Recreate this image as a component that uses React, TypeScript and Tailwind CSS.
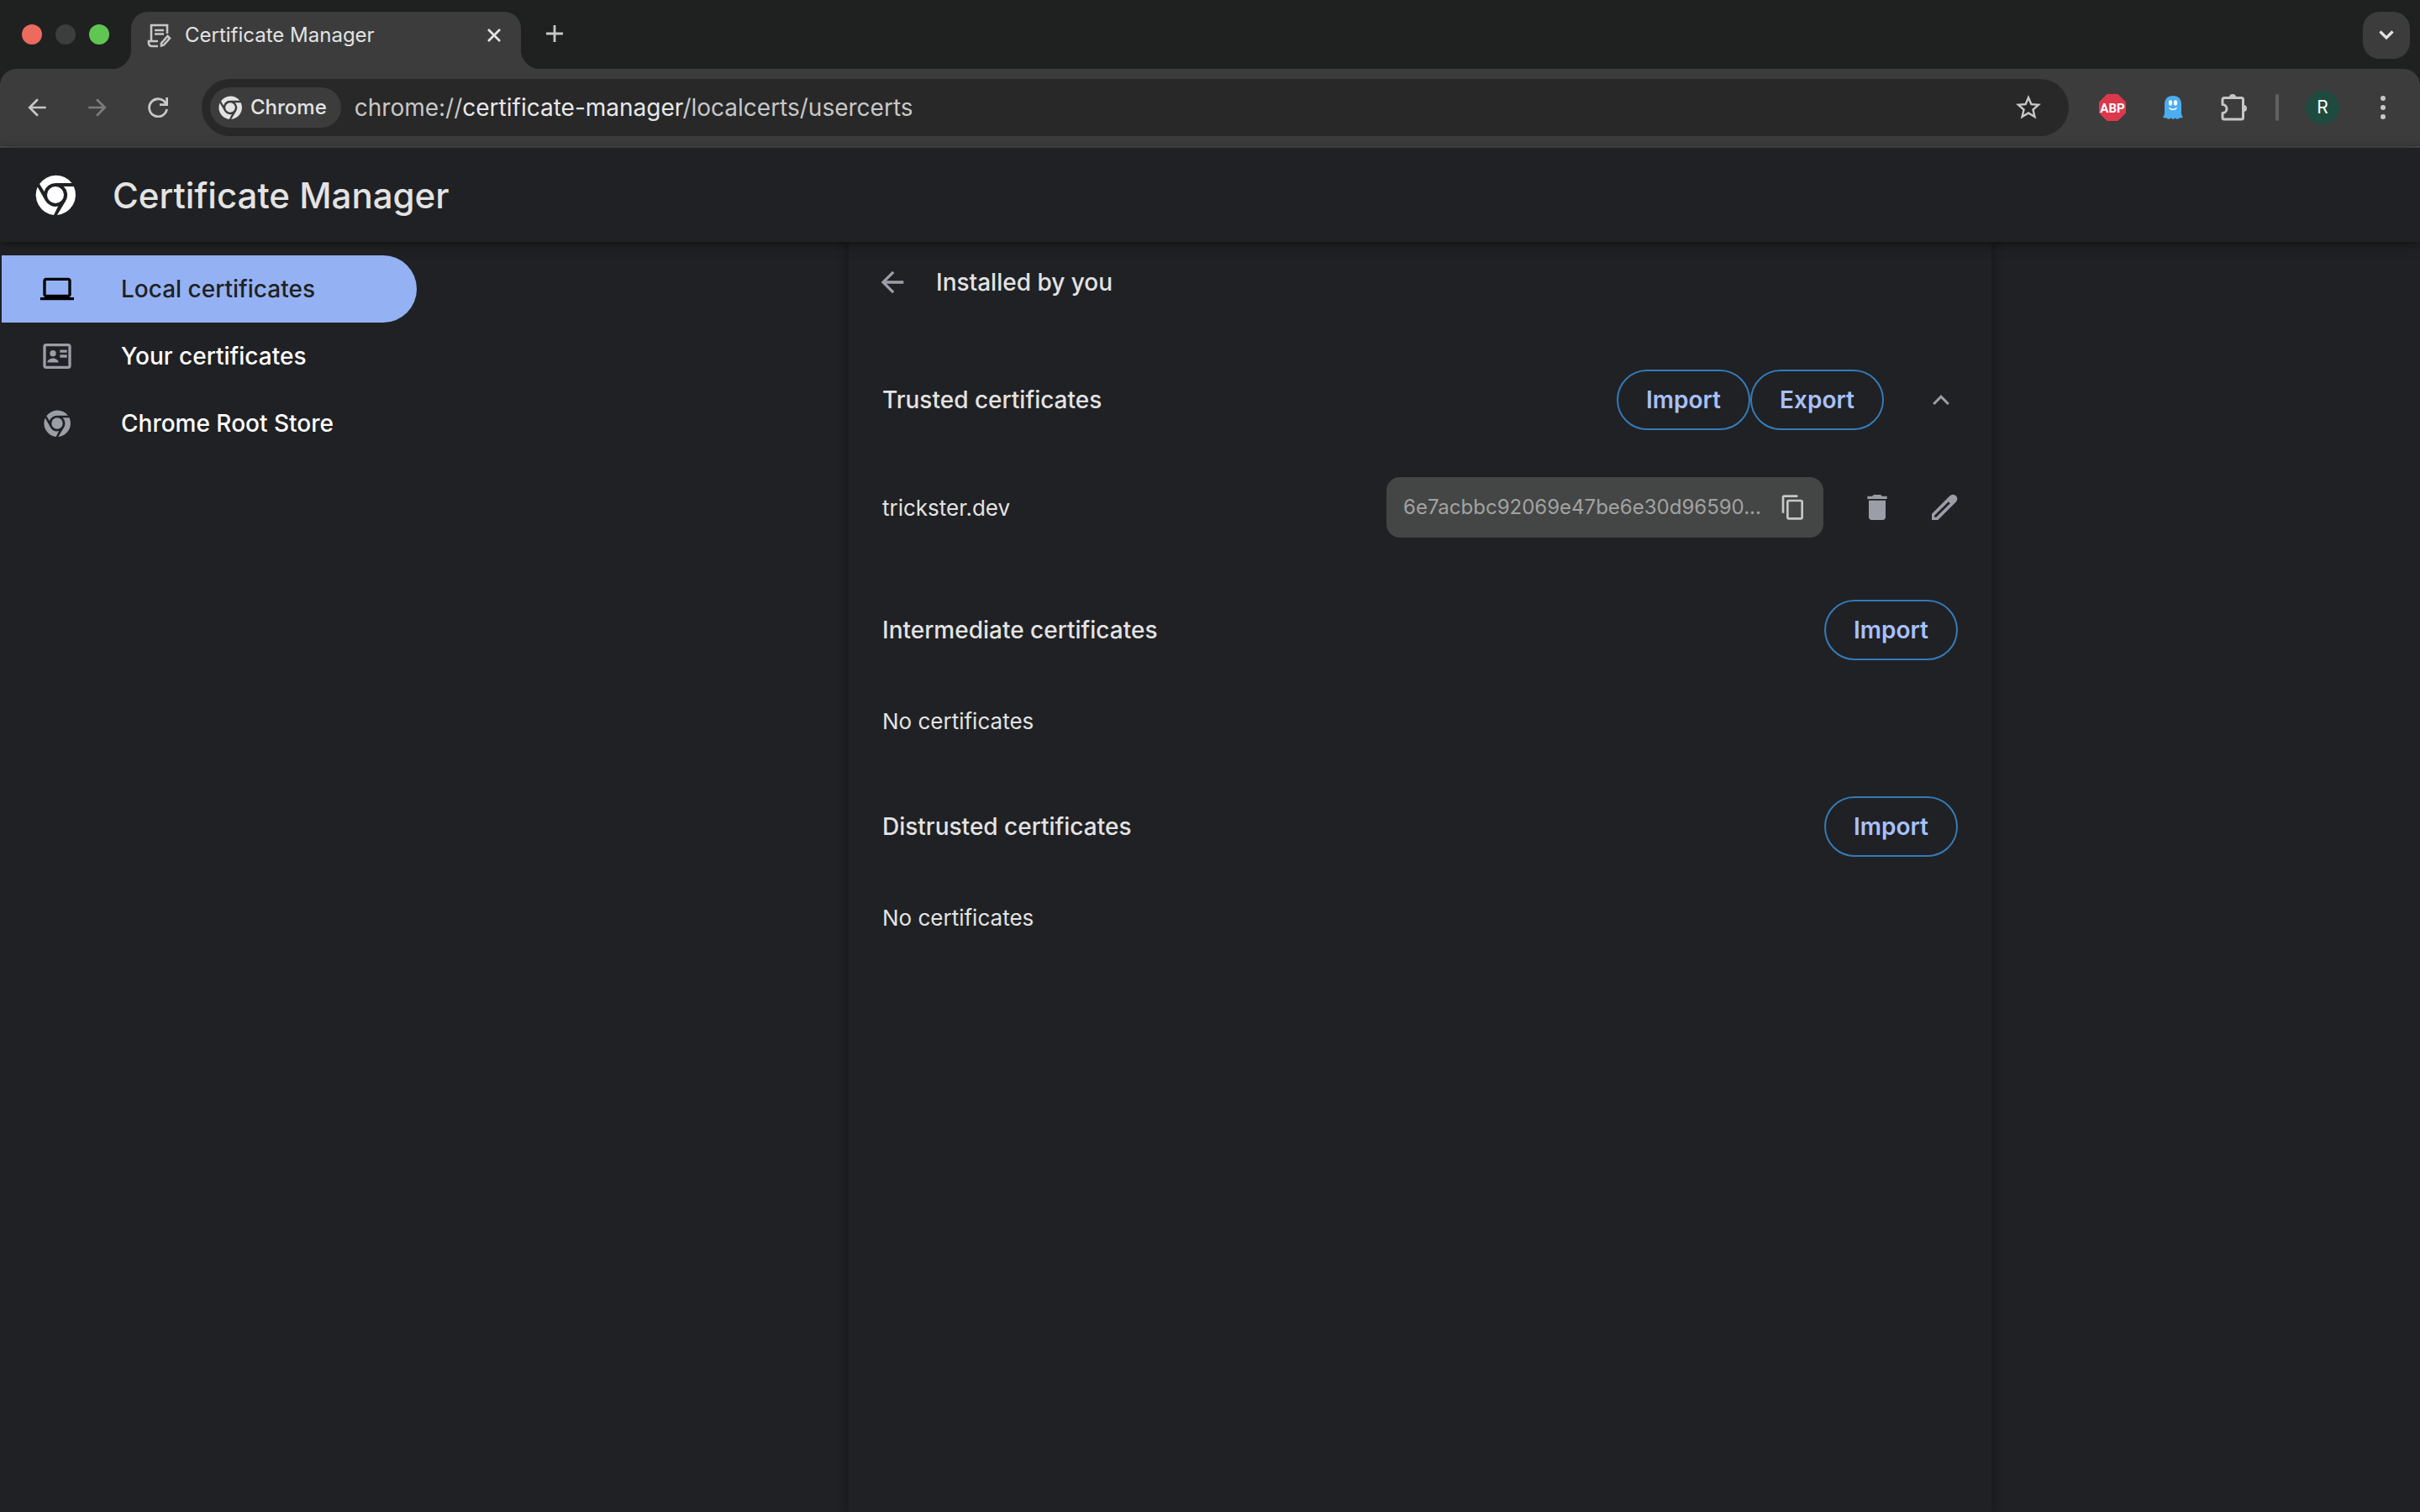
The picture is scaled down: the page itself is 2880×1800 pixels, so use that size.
import React from "react";

const ChromeLogo: React.FC<{ className?: string }> = ({ className }) => (
  <svg viewBox="0 0 48 48" fill="currentColor" className={className} aria-hidden="true">
    <circle cx="24" cy="24" r="10" />
    <path d="M5 11A24 24 0 0 1 43.5 10H24A14 14 0 0 0 10.6 20Z" />
    <path d="M45.8 14A24 24 0 0 1 26 47.9L36 31.5A14 14 0 0 0 33.8 14Z" />
    <path d="M2.7 14.4A24 24 0 0 0 22 47.9L27.2 37.6A14 14 0 0 1 12 31Z" />
  </svg>
);

const PageIcon: React.FC<{ d: string; className?: string }> = ({ d, className }) => (
  <svg viewBox="0 0 24 24" fill="currentColor" fillRule="evenodd" className={className} aria-hidden="true">
    <path d={d} />
  </svg>
);

const icons = {
  back: "M20 11H7.83l5.59-5.59L12 4l-8 8 8 8 1.41-1.41L7.83 13H20v-2z",
  laptop:
    "M20 18c1.1 0 1.99-.9 1.99-2L22 6c0-1.1-.9-2-2-2H4c-1.1 0-2 .9-2 2v10c0 1.1.9 2 2 2H0v2h24v-2h-4zM4 6h16v10H4V6z",
  copy: "M16 1H4c-1.1 0-2 .9-2 2v14h2V3h12V1zm3 4H8c-1.1 0-2 .9-2 2v14c0 1.1.9 2 2 2h11c1.1 0 2-.9 2-2V7c0-1.1-.9-2-2-2zm0 16H8V7h11v14z",
  trash: "M6 19c0 1.1.9 2 2 2h8c1.1 0 2-.9 2-2V7H6v12zM19 4h-3.5l-1-1h-5l-1 1H5v2h14V4z",
  pencil:
    "M3 16.6V21h4.4L20.3 8.100a2.900 2.900 0 0 0-4.400-4.400zM4.900 17.900L14.900 7.900l1.200 1.200-10 10H4.900z",
  contacts:
    "M20 3H4c-1.1 0-2 .9-2 2v14c0 1.1.9 2 2 2h16c1.1 0 2-.9 2-2V5c0-1.1-.9-2-2-2zm0 16H4V5h16v14zM14 7.5h5v2h-5zM14 11h5v2h-5zM9 12.2a2.2 2.2 0 1 0 0-4.4 2.2 2.2 0 0 0 0 4.4zM5 16.500c0-2 2.600-3 4-3s4 1 4 3z",
};

const TabStrip: React.FC = () => (
  <div className="flex h-[82px] items-end bg-[#1f2120]">
    <div className="flex h-[82px] items-center gap-4 pl-[26px] pr-[26px]">
      <span className="size-6 rounded-full bg-[#ed6a5e]" />
      <span className="size-6 rounded-full bg-[#3c3e3d]" />
      <span className="size-6 rounded-full bg-[#61c554]" />
    </div>
    <div className="relative flex h-[68px] w-[464px] items-center rounded-t-[20px] bg-[#3c3c3c] pb-3 pl-[18px] pr-6 text-[#e3e3e3]">
      <span className="absolute bottom-0 -left-6 size-6 bg-[radial-gradient(circle_at_0_0,#1f2120_24px,#3c3c3c_25px)]" />
      <span className="absolute bottom-0 -right-6 size-6 bg-[radial-gradient(circle_at_100%_0,#1f2120_24px,#3c3c3c_25px)]" />
      <svg viewBox="0 0 30 30" className="mr-4 size-[30px] text-[#c7c7c7]" fill="none" stroke="currentColor" strokeWidth="2.6" aria-hidden="true">
        <path d="M6 21V3h19v10M10 9h11M10 13.5h11M14 22H3v2c0 2 1 4 4 4h7" />
        <path d="M18 27.5v-3l7.500-8.500 2.500 2.500-7 8z" />
      </svg>
      <span className="flex-1 text-[24px] leading-8">Certificate Manager</span>
      <button aria-label="Close tab" className="flex items-center">
        <svg viewBox="0 0 16 16" className="size-4" fill="none" stroke="currentColor" strokeWidth="2.8" aria-hidden="true">
          <path d="M1 1l14 14M15 1L1 15" />
        </svg>
      </button>
    </div>
    <button aria-label="New tab" className="mb-8 ml-[30px] text-[#c7c7c7]">
      <svg viewBox="0 0 20 20" className="size-5" fill="none" stroke="currentColor" strokeWidth="2.8" aria-hidden="true">
        <path d="M10 0v20M0 10h20" />
      </svg>
    </button>
    <button
      aria-label="Search tabs"
      className="mb-3 ml-auto mr-3 flex size-14 items-center justify-center rounded-[20px] bg-[#3c3c3c] text-[#e3e3e3]"
    >
      <svg viewBox="0 0 18 12" className="h-3 w-[18px]" fill="none" stroke="currentColor" strokeWidth="3.2" aria-hidden="true">
        <path d="M1.5 1.5L9 9l7.5-7.5" />
      </svg>
    </button>
  </div>
);

const Toolbar: React.FC = () => (
  <div className="bg-[#1f2120]">
    <div className="flex h-[94px] items-center rounded-t-[20px] border-b-2 border-[#4a4a4a] bg-[#3c3c3c] pl-7 pr-9 text-[#c7c7c7]">
      <button aria-label="Back">
        <PageIcon d={icons.back} className="size-8" />
      </button>
      <button aria-label="Forward" className="ml-10 text-[#7c7c7c]">
        <PageIcon d={icons.back} className="size-8 rotate-180" />
      </button>
      <button aria-label="Reload" className="ml-11">
        <svg viewBox="0 0 24 24" className="size-6" fill="none" stroke="currentColor" strokeWidth="2.8" aria-hidden="true">
          <path d="M22.5 14A10.5 10.5 0 1 1 21.5 7.5M22.6 0v8.6H14" />
        </svg>
      </button>
      <div className="ml-10 flex h-[68px] flex-1 items-center rounded-full bg-[#282828] pl-[10px] pr-[30px]">
        <button className="flex h-12 items-center gap-[10px] rounded-full bg-[#3c3c3c] pl-[10px] pr-[17px] text-[24px] font-medium text-[#e3e3e3]">
          <ChromeLogo className="size-7" />
          Chrome
        </button>
        <div className="ml-4 flex-1 text-[28px] leading-9">
          chrome://<span className="text-[#e8e8e8]">certificate-manager</span>/localcerts/usercerts
        </div>
        <button aria-label="Bookmark this tab">
          <svg viewBox="0 0 24 24" className="size-9" fill="currentColor" aria-hidden="true">
            <path d="M22 9.24l-7.19-.62L12 2 9.19 8.63 2 9.24l5.46 4.73L5.82 21 12 17.27 18.18 21l-1.63-7.03L22 9.24zM12 15.4l-3.76 2.27 1-4.28-3.32-2.88 4.38-.38L12 6.1l1.71 4.04 4.38.38-3.32 2.88 1 4.28L12 15.4z" />
          </svg>
        </button>
      </div>
      <button aria-label="Adblock Plus" className="ml-9">
        <svg viewBox="0 0 32 32" className="size-8" aria-hidden="true">
          <path d="M9.5 0h13L32 9.5v13L22.5 32h-13L0 22.5v-13z" fill="#dc384c" />
          <text x="16" y="21.5" textAnchor="middle" fontSize="15" fontWeight="700" fill="#fff" fontFamily="Roboto, sans-serif">
            ABP
          </text>
        </svg>
      </button>
      <button aria-label="Ghostery" className="ml-[42px]">
        <svg viewBox="0 0 28 32" className="h-8 w-7" aria-hidden="true">
          <path
            d="M14 2C7.500 2 4 6 4 12v9c0 4-1 5-2 7l4 .5 3 1.5 2.500-1.500L14 30l2.500-1.500L19 30l3-1.500 4-.5c-1-2-2-3-2-7v-9c0-6-3.500-10-10-10z"
            fill="#4aaef0"
          />
          <ellipse cx="11" cy="10.5" rx="2.1" ry="3.2" fill="#fff" />
          <ellipse cx="17" cy="10.5" rx="2.1" ry="3.2" fill="#fff" />
          <path d="M9.5 16.5q4.5 4 9 0" fill="none" stroke="#fff" strokeWidth="1.6" />
        </svg>
      </button>
      <button aria-label="Extensions" className="ml-10">
        <svg viewBox="0 0 36 36" className="size-9" fill="none" stroke="currentColor" strokeWidth="3" aria-hidden="true">
          <path d="M5 8.5q0-2 2-2h20.5q2 0 2 2v21.5q0 2-2 2H7q-2 0-2-2v-5.5a5 5 0 0 0 0-10z" strokeLinejoin="round" />
          <path d="M13 6a4 4 0 0 1 8 0zM30 15a4 4 0 0 1 0 8z" fill="currentColor" stroke="none" />
        </svg>
      </button>
      <span className="ml-8 h-8 w-1 rounded-full bg-[#606060]" />
      <button className="ml-8 flex size-10 items-center justify-center rounded-full bg-[#1e4a3f] text-[21px] text-white">R</button>
      <button aria-label="Menu" className="ml-[44px] flex w-4 flex-col items-center gap-[5px]">
        <span className="size-[6px] rounded-full bg-[#c7c7c7]" />
        <span className="size-[6px] rounded-full bg-[#c7c7c7]" />
        <span className="size-[6px] rounded-full bg-[#c7c7c7]" />
      </button>
    </div>
  </div>
);

const Sidebar: React.FC = () => (
  <nav className="flex w-[500px] flex-col pl-[2px] pt-4 text-[28px] font-medium text-white">
    <a href="#local" className="flex h-20 w-[494px] items-center gap-14 rounded-r-full bg-[#94b2f3] pl-[46px] text-[#202124]">
      <PageIcon d={icons.laptop} className="size-10 text-black" />
      Local certificates
    </a>
    <a href="#yours" className="flex h-20 items-center gap-14 pl-[46px]">
      <PageIcon d={icons.contacts} className="size-10 text-[#9b9ea7]" />
      Your certificates
    </a>
    <a href="#root-store" className="flex h-20 items-center gap-14 pl-[46px]">
      <span className="flex size-10 items-center justify-center text-[#9b9ea7]">
        <ChromeLogo className="size-8" />
      </span>
      Chrome Root Store
    </a>
  </nav>
);

const OutlineButton: React.FC<{ label: string }> = ({ label }) => (
  <button className="h-[72px] w-[159px] rounded-full border-2 border-[#357ab8] text-[28px] font-semibold text-[#a8c0fa]">
    {label}
  </button>
);

const EmptySection: React.FC<{ title: string }> = ({ title }) => (
  <section>
    <div className="flex h-[72px] items-center justify-between">
      <h2 className="text-[28px] font-medium">{title}</h2>
      <OutlineButton label="Import" />
    </div>
    <p className="mt-[53px] text-[26px] leading-10">No certificates</p>
  </section>
);

const CertificateList: React.FC = () => (
  <main className="w-[1360px] px-10 text-[#e3e3e3] shadow-[0_0_12px_2px_rgba(0,0,0,0.3)]">
    <div className="flex h-24 items-center">
      <button aria-label="Back" className="-ml-2 text-[#9b9ea7]">
        <PageIcon d={icons.back} className="size-10" />
      </button>
      <h1 className="ml-8 text-[28px] font-medium">Installed by you</h1>
    </div>

    <section className="mt-14">
      <div className="flex h-[72px] items-center">
        <h2 className="flex-1 text-[28px] font-medium">Trusted certificates</h2>
        <OutlineButton label="Import" />
        <OutlineButton label="Export" />
        <button aria-label="Collapse" className="ml-[58px] mr-[10px] text-[#9b9ea7]">
          <svg viewBox="0 0 20 12" className="h-3 w-5" fill="none" stroke="currentColor" strokeWidth="3" aria-hidden="true">
            <path d="M1.2 11L10 2.2 18.8 11" />
          </svg>
        </button>
      </div>
      <div className="mt-14 flex h-[72px] items-center">
        <span className="flex-1 text-[26px]">trickster.dev</span>
        <div className="flex h-[72px] w-[520px] items-center rounded-2xl bg-[#444645] pl-5 pr-5">
          <input
            readOnly
            aria-label="SHA-256 hash"
            value="6e7acbbc92069e47be6e30d96590..."
            className="w-full min-w-0 flex-1 bg-transparent text-[24px] text-[#a2a2a2] outline-none"
          />
          <button aria-label="Copy hash" className="text-[#c7c7c7]">
            <PageIcon d={icons.copy} className="size-8" />
          </button>
        </div>
        <button aria-label="Delete" className="ml-11 text-[#9b9ea7]">
          <PageIcon d={icons.trash} className="size-10" />
        </button>
        <button aria-label="Edit" className="ml-10 -mr-1 text-[#9b9ea7]">
          <PageIcon d={icons.pencil} className="size-10" />
        </button>
      </div>
    </section>

    <div className="mt-[74px] flex flex-col gap-[69px]">
      <EmptySection title="Intermediate certificates" />
      <EmptySection title="Distrusted certificates" />
    </div>
  </main>
);

export default function App() {
  return (
    <div className="flex min-h-screen flex-col bg-[#202124] font-['Inter','Liberation_Sans',sans-serif]">
      <TabStrip />
      <Toolbar />
      <header className="z-10 flex h-28 items-center gap-11 bg-[#202124] pl-[42px] text-white shadow-[0_2px_12px_rgba(0,0,0,0.5)]">
        <ChromeLogo className="size-12" />
        <span className="text-[42px] font-medium text-[#e3e3e3]">Certificate Manager</span>
      </header>
      <div className="flex flex-1 overflow-hidden">
        <Sidebar />
        <div className="flex flex-1 justify-center">
          <CertificateList />
        </div>
      </div>
    </div>
  );
}
